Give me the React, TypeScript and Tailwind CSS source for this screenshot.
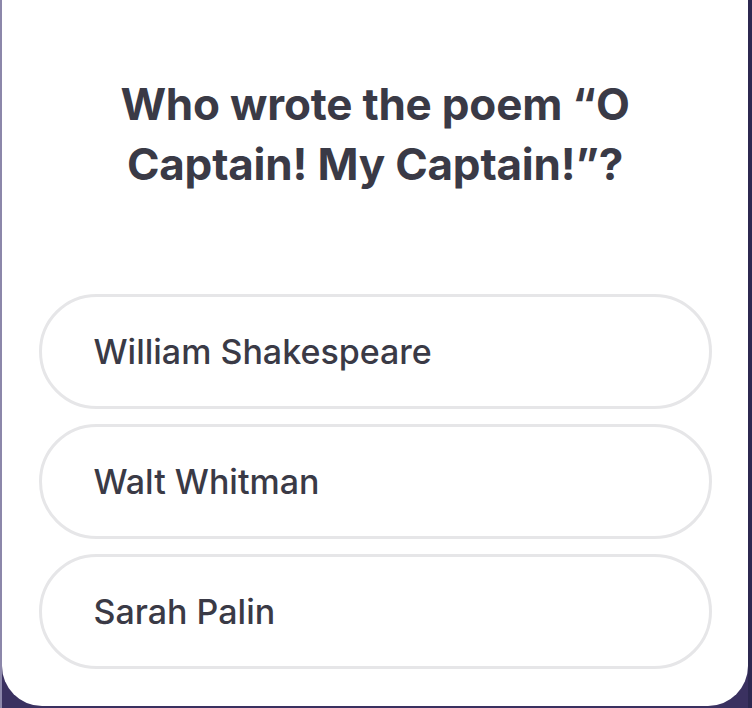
/* --- Data --- */
const answers = ['William Shakespeare', 'Walt Whitman', 'Sarah Palin'];

/* --- App Component --- */
export default function App() {
	return (
		<div className="w-[752px] h-[708px] bg-[#3a3160] overflow-hidden flex">
			<div className="w-[2px] h-full bg-[#8c87aa]" />
			<div className="w-[746px] h-[706px] bg-white rounded-b-[40px] flex flex-col items-center font-['Inter',sans-serif] text-[#3a3a46]">
				<h1 className="mt-[74px] w-[560px] text-center font-bold text-[44px] leading-[60px] tracking-[-0.2px]">
					Who wrote the poem “O Captain! My Captain!”?
				</h1>

				<ul className="mt-[100px] flex flex-col gap-[15px] w-[673px]">
					{answers.map(text => (
						<li
							key={text}
							className="h-[115px] rounded-full border-[3px] border-[#e6e6e8] flex items-center pl-[52px] text-[34px] font-medium"
						>
							{text}
						</li>
					))}
				</ul>
			</div>
			<div className="w-[4px] h-full bg-[#2c2850]" />
		</div>
	);
}
